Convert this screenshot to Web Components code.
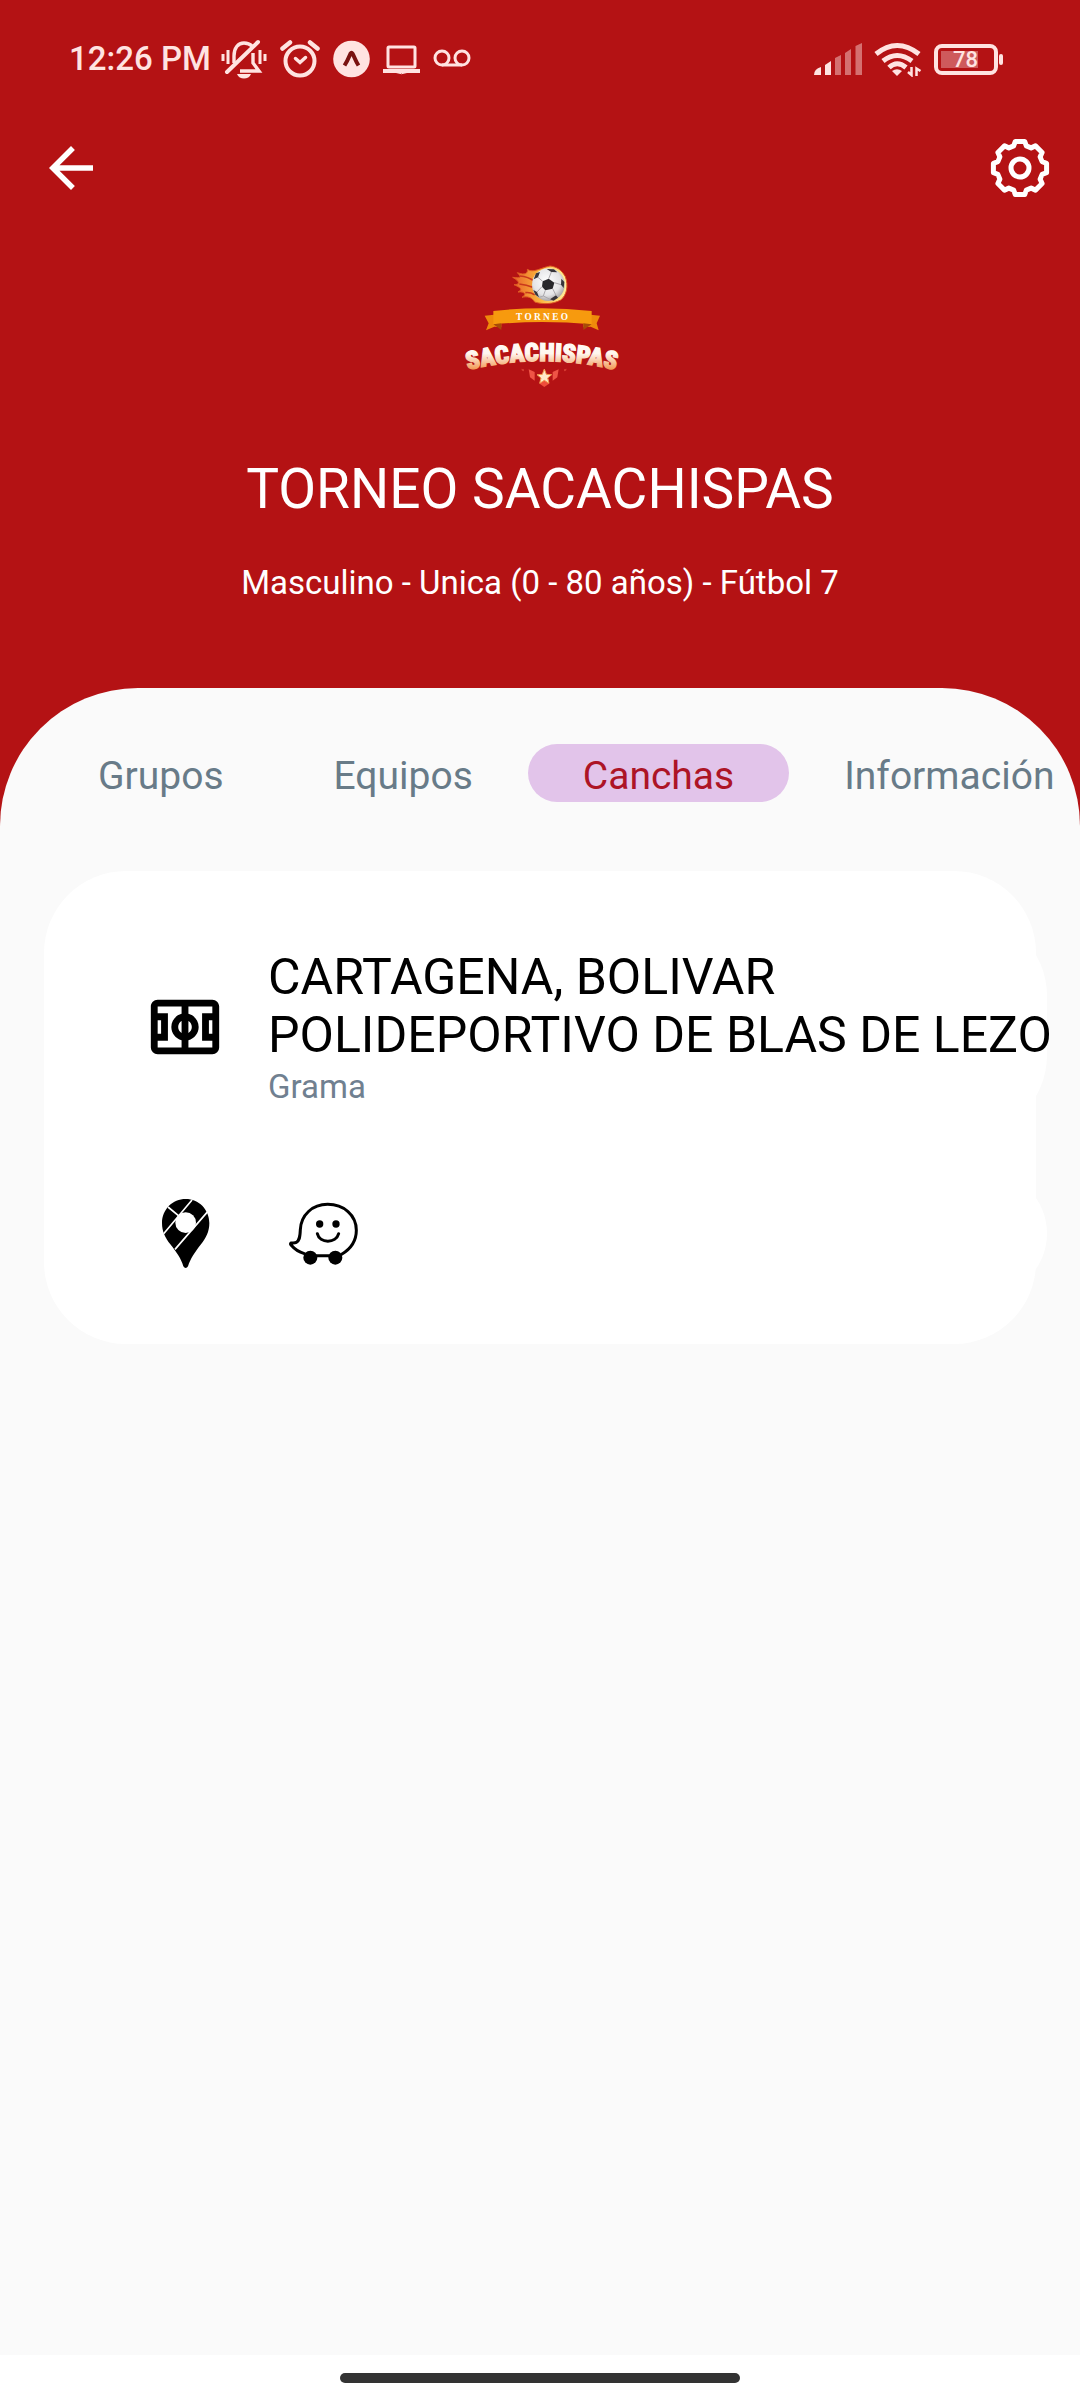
<!DOCTYPE html>
<html lang="es">
<head>
<meta charset="utf-8">
<meta name="viewport" content="width=device-width, initial-scale=1">
<title>Torneo Sacachispas</title>
<style>
  html, body { margin: 0; }
  body { font-family: Roboto, "Noto Sans", sans-serif; background: #fff; }
</style>
</head>
<body>
<tournament-app></tournament-app>

<script>
const define = (name, markup, ready) => {
  const template = document.createElement('template');
  template.innerHTML = markup;
  customElements.define(name, class extends HTMLElement {
    constructor() {
      super();
      this.attachShadow({ mode: 'open' }).append(template.content.cloneNode(true));
    }
    connectedCallback() { if (ready) ready(this, this.shadowRoot); }
  });
};

/* Closed outline of an eight-toothed gear around (33,33). */
const gearPath = () => {
  const points = [];
  for (let tooth = 0; tooth < 8; tooth++) {
    for (const [offset, radius] of [[-16, 23], [-10, 27], [10, 27], [16, 23]]) {
      const a = (tooth * 45 + offset) * Math.PI / 180;
      points.push((33 + radius * Math.cos(a)).toFixed(2) + ' ' + (33 + radius * Math.sin(a)).toFixed(2));
    }
  }
  return 'M' + points.join('L') + 'Z';
};

define('status-bar', `
  <style>
    :host { display: flex; align-items: center; justify-content: space-between; height: 118px;
            padding: 0 76px 0 69px; color: #ffe3e1; }
    div { display: flex; align-items: center; }
    .left { gap: 13px; }
    .clock { font-size: 33px; font-weight: 500; line-height: 40px; margin-right: -3px; }
    .right { gap: 12px; }
    svg { display: block; }
    .battery { width: 70px; height: 32px; }
    text { font: 500 22px Roboto, sans-serif; }
  </style>
  <div class="left">
    <span class="clock">12:26 PM</span>
    <svg width="46" height="40" viewBox="0 0 46 40" fill="none" stroke="currentColor" stroke-width="3.400">
      <path d="M13 24V17C13 9 17 4 23 4C27 4 29 5 31 7M32 14V24L38 32H19" />
      <path d="M6 33L37 3" stroke-width="4" stroke-linecap="round"/>
      <path d="M16 35H30C28 41 18 41 16 35Z" fill="currentColor" stroke="none"/>
      <path d="M2 15V22M7 11V25M39 11V25M44 15V22" stroke-width="3"/>
    </svg>
    <svg width="40" height="40" viewBox="0 0 40 40" fill="none" stroke="currentColor" stroke-linecap="round">
      <circle cx="20" cy="22" r="14.500" stroke-width="4"/>
      <path d="M2.500 9.500L10 3.500M37.500 9.500L30 3.500" stroke-width="4.500"/>
      <path d="M15.500 19.500L20 23.500L25.500 18.500" stroke-width="3.500"/>
    </svg>
    <svg width="37" height="40" viewBox="0 0 37 40">
      <circle cx="18.500" cy="20" r="18.300" fill="currentColor"/>
      <path d="M11.500 26.500C14.500 22 16 18 17.500 14.500Q18.500 13 19.500 14.500C21.500 18 22.500 22 25.500 26.500" fill="none" stroke="#7a1210" stroke-width="4"/>
    </svg>
    <svg width="37" height="40" viewBox="0 0 37 40" fill="none" stroke="currentColor" stroke-width="3">
      <rect x="5" y="8" width="27" height="20" rx="1"/>
      <path d="M0 32H37" stroke-width="4"/>
      <path d="M13 33.500Q18.500 36 24 33.500" stroke-width="1"/>
    </svg>
    <svg width="38" height="40" viewBox="0 0 38 40" fill="none" stroke="currentColor" stroke-width="3">
      <circle cx="9" cy="19" r="7"/><circle cx="29" cy="19" r="7"/><path d="M9 26H29"/>
    </svg>
  </div>
  <div class="right">
    <svg width="48" height="36" viewBox="0 0 48 36" fill="currentColor">
      <path d="M0 34Q0 28 7 26V34Z"/>
      <path d="M11 34V24L17 20V34Z"/>
      <g opacity=".45"><path d="M21 34V17L27 14V34Z"/><path d="M31 34V12L37 8V34Z"/><path d="M41.500 34V5L48 2V34Z"/></g>
    </svg>
    <svg width="48" height="36" viewBox="0 0 48 36" fill="none" stroke="currentColor" stroke-width="5">
      <path d="M2 13Q23 -4 45 13M9 20Q23 9 38 20M15 26.500Q23 19 32 26.500"/>
      <path d="M18 30Q23 26.500 28 30L23 35Z" fill="currentColor" stroke="none"/>
      <path d="M37.500 26V34L34 31M42.500 35V27.500L46.500 30" stroke-width="2.500"/>
    </svg>
    <svg class="battery" viewBox="0 0 70 32" fill="currentColor">
      <rect x="2" y="3" width="60" height="27" rx="6" fill="none" stroke="currentColor" stroke-width="4"/>
      <rect x="7" y="8" width="37" height="17" opacity=".35"/>
      <rect x="65" y="11" width="4" height="11" rx="2"/>
      <text x="19" y="24">78</text>
    </svg>
  </div>`);

define('tool-bar', `
  <style>
    :host { display: flex; align-items: center; justify-content: space-between; height: 100px; padding: 0 27px 0 38px; }
    button { display: block; padding: 0; border: 0; background: none; color: #fff; cursor: pointer; }
    svg { display: block; width: 66px; height: 66px; }
  </style>
  <button type="button" aria-label="Volver">
    <svg viewBox="0 0 24 24" fill="currentColor"><path d="M20 11H7.830l5.590-5.590L12 4l-8 8 8 8 1.410-1.410L7.830 13H20v-2z"/></svg>
  </button>
  <button type="button" aria-label="Ajustes">
    <svg viewBox="0 0 66 66" fill="none" stroke="currentColor" stroke-width="5" stroke-linejoin="round">
      <path class="gear"/><circle cx="33" cy="33" r="9"/>
    </svg>
  </button>`, (host, root) => root.querySelector('.gear').setAttribute('d', gearPath()));

define('tournament-logo', `
  <style>
    :host { display: block; }
    svg { display: block; width: 200px; height: 150px; overflow: visible; }
    .small { font: 700 28px "Liberation Serif", serif; }
    .big { font: 900 75px "Roboto Condensed", "Open Sans Condensed", Roboto, sans-serif; }
  </style>
  <svg viewBox="0 0 600 450" role="img" aria-label="Torneo Sacachispas">
    <defs>
      <linearGradient id="letters" x1="0" y1="255" x2="0" y2="366" gradientUnits="userSpaceOnUse">
        <stop offset="0" stop-color="#fff"/><stop offset=".5" stop-color="#fff6ee"/><stop offset="1" stop-color="#f08a3c"/>
      </linearGradient>
      <linearGradient id="flame" x1="0" x2="1"><stop offset="0" stop-color="#e8622a"/><stop offset=".5" stop-color="#fbb53c"/><stop offset="1" stop-color="#fff0a0"/></linearGradient>
      <radialGradient id="ball" cx=".45" cy=".4" r=".6"><stop offset="0" stop-color="#fff"/><stop offset=".7" stop-color="#e4e4e6"/><stop offset="1" stop-color="#a9a6a8"/></radialGradient>
      <path id="arc" d="M40 372Q305 294 570 372"/>
    </defs>
    <path d="M330 48C300 54 280 70 262 58C264 70 256 76 232 68C244 80 246 86 218 82C236 92 244 104 222 104C240 112 250 118 234 126C252 124 262 132 246 142C262 138 276 142 284 156C310 164 340 162 362 150C380 136 386 108 376 80C364 58 348 50 330 48Z" fill="url(#flame)" stroke="#df5b22" stroke-width="3"/>
    <path d="M240 78Q264 80 284 94M238 102Q260 104 278 112M256 128Q270 126 284 134" stroke="#c9381c" stroke-width="5" fill="none"/>
    <circle cx="325" cy="104" r="49" fill="url(#ball)"/>
    <path d="M308 94L326 86L343 98L338 116L316 121L306 110Z" fill="#28272b"/>
    <path d="M281 88L288 70L300 66L294 82ZM320 57L342 58L352 67L334 66ZM364 86L373 96L371 114L363 104ZM330 148L348 136L354 143L341 152ZM280 120L291 126L297 142L286 134Z" fill="#37353a"/>
    <path d="M308 94L294 82M326 86L334 66M343 98L363 104M338 116L348 136M316 121L310 138L297 142M306 110L291 126M310 138L330 148" stroke="#aaa8ac" stroke-width="3" fill="none"/>
    <path d="M134 197L184 192V232L163 230L138 241L146 220ZM480 197L430 192V232L452 230L476 241L470 220Z" fill="#ef8a0b"/>
    <path d="M160 183Q306 166 455 183V223Q306 209 160 223Z" fill="#f79a0e"/>
    <path d="M160 223L184 220V240ZM455 223L430 220V240Z" fill="#a84a08"/>
    <text class="small" fill="#fff" x="306" y="210" text-anchor="middle">T O R N E O</text>
    <text class="big" fill="url(#letters)" stroke="url(#letters)" stroke-width="4"><textPath href="#arc" startOffset="50%" text-anchor="middle">SACACHISPAS</textPath></text>
    <path d="M266 358L284 366V392L270 382ZM356 358L338 366V392L352 382Z" fill="#ef5446"/>
    <path d="M244 356L252 358V364L246 362ZM380 356L372 358V364L378 362Z" fill="#d33a30"/>
    <path d="M300 386H326V402L313 411L300 402Z" fill="#ef4d3a"/>
    <path d="M313 357L319 373L335 374L323 384L327 400L313 391L299 400L303 384L291 374L307 373Z" fill="#ffe9c9" stroke="#f29a4d" stroke-width="3"/>
  </svg>`);

define('tournament-header', `
  <style>
    :host { display: flex; flex-direction: column; align-items: center; padding: 32px 24px 85px; color: #fff; text-align: center; }
    h1 { margin: 57px 0 0; font-size: 55px; line-height: 64px; font-weight: 400; }
    p { margin: 42px 0 0; font-size: 33px; line-height: 40px; }
  </style>
  <tournament-logo></tournament-logo>
  <h1><slot name="title"></slot></h1>
  <p><slot name="category"></slot></p>`);

define('tab-item', `
  <style>
    :host { display: block; flex: none; }
    button { display: block; padding: 6px 55px 0; border: 0; border-radius: 29px; background: none; color: #687b88;
             font-family: inherit; font-size: 39px; line-height: 52px; white-space: nowrap; cursor: pointer; }
    :host([selected]) button { background: #e2c4ea; color: #ad1426; }
  </style>
  <button type="button" role="tab"><slot></slot></button>`,
  (host, root) => root.querySelector('button').setAttribute('aria-selected', host.hasAttribute('selected')));

define('tab-strip', `
  <style>
    :host { display: flex; padding-left: 43px; overflow: hidden; }
  </style>
  <slot></slot>`);

define('venue-card', `
  <style>
    :host { display: flex; flex-direction: column; gap: 34px; margin: 0 44px; padding: 43px 0 48px;
            border-radius: 82px; background: #fff; }
    .row { display: flex; align-items: center; box-sizing: border-box; width: 100%; margin-left: 11px;
           border-radius: 82px; background: #fff; }
    .info { gap: 42px; padding: 32px 0 30px 89px; }
    .links { gap: 69px; padding: 28px 0 28px 96px; }
    h2 { margin: 0; padding-top: 2px; font-size: 50px; line-height: 58px; font-weight: 400; color: #000; white-space: nowrap; }
    p { margin: 0; padding-top: 3px; font-size: 33px; line-height: 40px; color: #708090; }
    a { display: block; color: #000; }
    svg { display: block; flex: none; width: 69px; height: 69px; }
    .field { width: 82px; height: 82px; }
  </style>
  <div class="row info">
    <svg class="field" viewBox="0 0 24 24"><path d="M4,4C2.890,4 2,4.890 2,6V18A2,2 0 0,0 4,20H20A2,2 0 0,0 22,18V6C22,4.890 21.100,4 20,4H4M4,6H11V8.130C9.240,8.590 8,10.180 8,12C8,13.820 9.240,15.410 11,15.870V18H4V16H7V8H4V6M13,6H20V8H17V16H20V18H13V15.870C14.760,15.410 16,13.820 16,12C16,10.180 14.760,8.590 13,8.130V6M4,10H5V14H4V10M19,10H20V14H19V10M13,10.270C13.620,10.630 14,11.290 14,12C14,12.710 13.620,13.370 13,13.730V10.270M11,10.270V13.730C10.380,13.370 10,12.710 10,12C10,11.290 10.380,10.630 11,10.270Z"/></svg>
    <div>
      <h2><slot name="city"></slot><br><slot name="venue"></slot></h2>
      <p><slot name="surface"></slot></p>
    </div>
  </div>
  <div class="row links">
    <a href="#maps" aria-label="Google Maps">
      <svg viewBox="0 0 207 207">
        <path d="M104 0C143 0 175 31 175 72C175 98 165 117 150 136C130 162 119 178 111 202Q108 207 104 207Q100 207 97 202C90 178 78 162 58 136C43 117 33 98 33 72C33 31 65 0 104 0Z"/>
        <g stroke="#fff" stroke-width="5"><path d="M123 3L38 104M170 38L72 151M51 24L86 53"/></g>
        <circle cx="104" cy="71" r="31" fill="#fff"/>
      </svg>
    </a>
    <a href="#waze" aria-label="Waze">
      <svg viewBox="0 0 207 207" fill="none" stroke="#000" stroke-width="9" stroke-linecap="round" stroke-linejoin="round">
        <path d="M158 166Q202 140 202 94C202 48 164 16 116 16C70 16 36 48 34 92C33 118 30 126 22 130C16 133 10 131 6 132Q3 135 7 139Q22 157 46 164M82 170H120"/>
        <circle cx="64" cy="176" r="21" fill="#000" stroke="none"/><circle cx="139" cy="176" r="21" fill="#000" stroke="none"/>
        <circle cx="92" cy="75" r="11" fill="#000" stroke="none"/><circle cx="141" cy="75" r="11" fill="#000" stroke="none"/>
        <path d="M85 104C92 134 141 134 149 104"/>
      </svg>
    </a>
  </div>`);

define('home-indicator', `
  <style>
    :host { display: flex; justify-content: center; height: 27px; padding-top: 18px; background: #fff; }
    span { width: 37%; height: 10px; border-radius: 5px; background: #333; }
  </style>
  <span></span>`);

define('tournament-app', `
  <style>
    :host { display: flex; flex-direction: column; min-height: 100vh; background: #b41214; overflow: hidden; }
    main { display: flex; flex: 1; flex-direction: column; gap: 69px; padding-top: 56px;
           border-radius: 138px 138px 0 0; background: #fafafa; overflow: hidden; }
  </style>
  <status-bar></status-bar>
  <tool-bar></tool-bar>
  <tournament-header>
    <span slot="title">TORNEO SACACHISPAS</span>
    <span slot="category">Masculino - Unica (0 - 80 años) - Fútbol 7</span>
  </tournament-header>
  <main>
    <tab-strip role="tablist">
      <tab-item>Grupos</tab-item>
      <tab-item>Equipos</tab-item>
      <tab-item selected>Canchas</tab-item>
      <tab-item>Información</tab-item>
    </tab-strip>
    <venue-card>
      <span slot="city">CARTAGENA, BOLIVAR</span>
      <span slot="venue">POLIDEPORTIVO DE BLAS DE LEZO</span>
      <span slot="surface">Grama</span>
    </venue-card>
  </main>
  <home-indicator></home-indicator>`);
</script>
</body>
</html>
